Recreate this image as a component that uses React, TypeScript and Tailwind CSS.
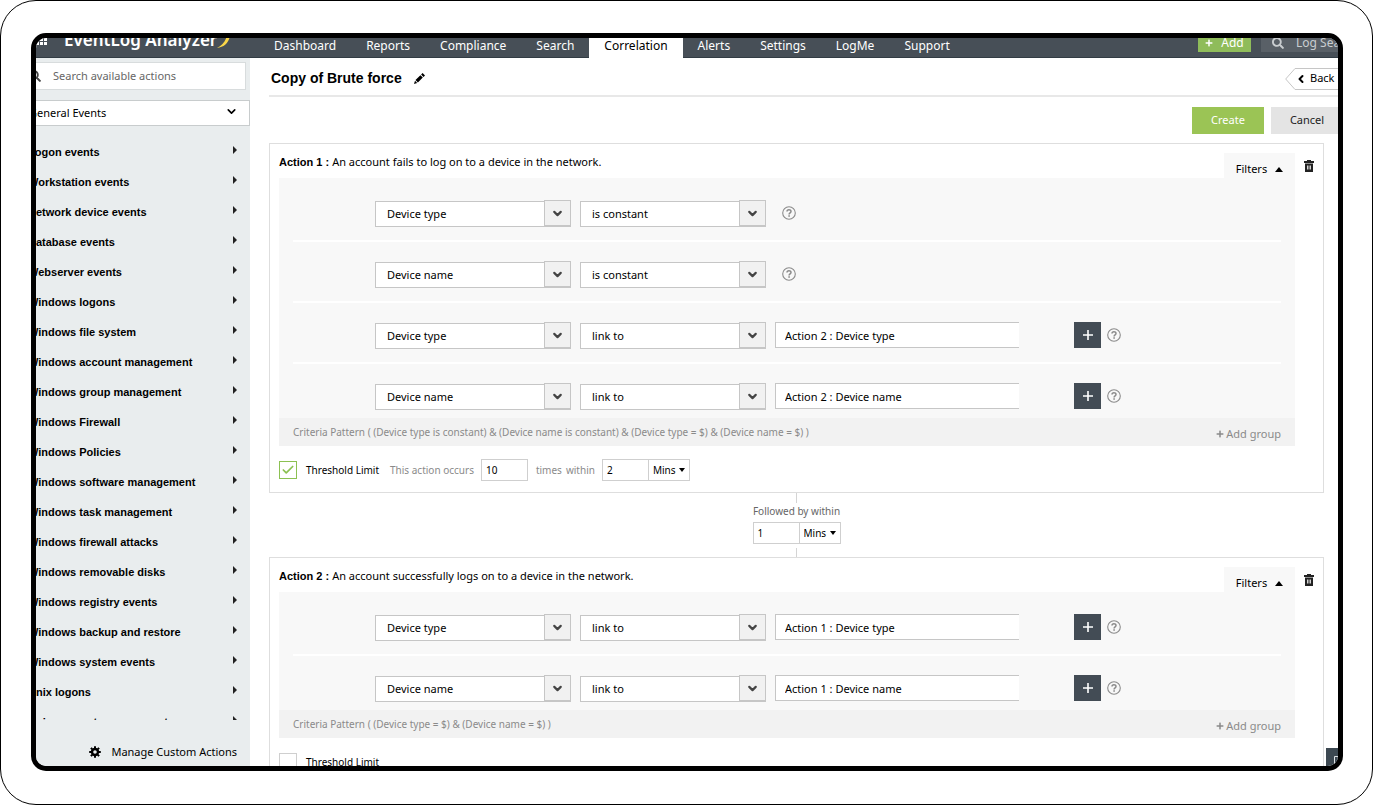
import React, { useState } from "react";
import { FaPlus, FaSearch } from "react-icons/fa";
import { FiCheck, FiChevronDown, FiChevronLeft } from "react-icons/fi";

interface ICriterion {
  field: string;
  operator: string;
  target?: string;
}

const navItems = [
  "Dashboard",
  "Reports",
  "Compliance",
  "Search",
  "Correlation",
  "Alerts",
  "Settings",
  "LogMe",
  "Support",
];

const eventGroups = [
  "Logon events",
  "Workstation events",
  "Network device events",
  "Database events",
  "Webserver events",
  "Windows logons",
  "Windows file system",
  "Windows account management",
  "Windows group management",
  "Windows Firewall",
  "Windows Policies",
  "Windows software management",
  "Windows task management",
  "Windows firewall attacks",
  "Windows removable disks",
  "Windows registry events",
  "Windows backup and restore",
  "Windows system events",
  "Unix logons",
  "Unix account management",
];

const firstCriteria: ICriterion[] = [
  { field: "Device type", operator: "is constant" },
  { field: "Device name", operator: "is constant" },
  { field: "Device type", operator: "link to", target: "Action 2 : Device type" },
  { field: "Device name", operator: "link to", target: "Action 2 : Device name" },
];

const secondCriteria: ICriterion[] = [
  { field: "Device type", operator: "link to", target: "Action 1 : Device type" },
  { field: "Device name", operator: "link to", target: "Action 1 : Device name" },
];

const TrashIcon: React.FC = () => (
  <svg viewBox="0 0 10 12" className="h-3 w-[10px]" fill="#222">
    <path d="M3 0h4v1h3v2H0V1h3z" />
    <path fillRule="evenodd" d="M1 3.6h8V12H1zM3.2 5.6v4h1.2v-4zM5.6 5.6v4h1.2v-4z" />
  </svg>
);

const GearIcon: React.FC = () => (
  <svg viewBox="0 0 12 12" className="h-3 w-3" fill="none" stroke="#000">
    <circle cx="6" cy="6" r="3" strokeWidth="2.4" />
    <path
      d="M6 .2v2M6 9.8v2M.2 6h2M9.8 6h2M1.9 1.9l1.4 1.4M8.7 8.7l1.4 1.4M1.9 10.1l1.4-1.4M8.7 3.3l1.4-1.4"
      strokeWidth="2"
    />
  </svg>
);

const PencilIcon: React.FC = () => (
  <svg viewBox="0 0 11 11" className="h-[11px] w-[11px]">
    <path d="M8.6 0 11 2.4 9.5 3.9 7.1 1.5zM6.4 2.2 8.8 4.6 3.9 9.5 1.5 7.1zM1 7.8 3.2 10 0 11z" />
  </svg>
);

const HelpButton: React.FC = () => (
  <button aria-label="Help" className="h-[14px] w-[14px] shrink-0">
    <svg viewBox="0 0 14 14" className="h-[14px] w-[14px]" fill="none" stroke="#8b8b8b">
      <circle cx="7" cy="7" r="6.3" strokeWidth="1.1" />
      <path d="M5 5.6C5 3.2 9 3.2 9 5.5 9 6.9 7.1 6.8 7.1 8.4" strokeWidth="1.5" />
      <path d="M7.1 9.3v1.5" strokeWidth="1.6" />
    </svg>
  </button>
);

const Dropdown: React.FC<{
  label: string;
  value: string;
  options: string[];
  className: string;
}> = ({ label, value, options, className }) => (
  <div className={`relative h-[26px] shrink-0 ${className}`}>
    <select
      aria-label={label}
      defaultValue={value}
      className="h-full w-full appearance-none border border-[#c6c6c6] bg-white pl-[11px] pr-8 text-[11px] text-black"
    >
      {options.map((option) => (
        <option key={option}>{option}</option>
      ))}
    </select>
    <span className="pointer-events-none absolute inset-y-0 right-0 flex w-[27px] items-center justify-center border border-[#c6c6c6] bg-[#f1f1f1]">
      <FiChevronDown className="h-[13px] w-[13px] text-[#444]" strokeWidth={4} />
    </span>
  </div>
);

const MinutesField: React.FC<{ label: string; value: string }> = ({ label, value }) => (
  <div className="flex h-[22px] border border-[#cfcfcf] bg-white">
    <input
      aria-label={label}
      defaultValue={value}
      className="w-[46px] border-r border-[#cfcfcf] px-1 text-[10px]"
    />
    <div className="relative w-10">
      <select
        aria-label={`${label} unit`}
        className="h-full w-full appearance-none pl-1 text-[10px]"
      >
        <option>Mins</option>
        <option>Hours</option>
      </select>
      <svg
        viewBox="0 0 6 4"
        className="pointer-events-none absolute right-1 top-2 h-1 w-[6px]"
      >
        <path d="M0 0h6L3 4z" />
      </svg>
    </div>
  </div>
);

const CriterionRow: React.FC<{ criterion: ICriterion }> = ({ criterion }) => (
  <li className="mt-[19px] flex items-center border-b-2 border-white pb-[14px] pl-[82px] first:mt-0 last:border-b-0 last:pb-0">
    <Dropdown
      label="Field"
      value={criterion.field}
      options={["Device type", "Device name"]}
      className="w-[196px]"
    />
    <Dropdown
      label="Operator"
      value={criterion.operator}
      options={["is constant", "link to"]}
      className="ml-[9px] w-[186px]"
    />
    {criterion.target ? (
      <>
        <input
          aria-label="Linked field"
          defaultValue={criterion.target}
          className="ml-[9px] h-[26px] w-[244px] border border-r-0 border-[#c6c6c6] bg-white px-[9px] text-[11px]"
        />
        <button
          aria-label="Add criterion"
          className="ml-[55px] mr-[6px] flex h-[26px] w-[27px] shrink-0 items-center justify-center bg-[#434c55]"
        >
          <svg viewBox="0 0 10 10" className="h-[10px] w-[10px]" stroke="#fff" strokeWidth="1.6">
            <path d="M5 0v10M0 5h10" />
          </svg>
        </button>
      </>
    ) : (
      <span className="w-4" />
    )}
    <HelpButton />
  </li>
);

const ActionCard: React.FC<{
  index: number;
  title: string;
  criteria: ICriterion[];
  pattern: string;
  threshold: boolean;
}> = ({ index, title, criteria, pattern, threshold }) => {
  const [enabled, setEnabled] = useState<boolean>(threshold);

  return (
    <section className="border border-[#dedede] pb-[11px] pl-[9px]">
      <div className="flex pt-[9px]">
        <h2 className="flex-1 text-[11px] leading-[17px]">
          <b className="font-[Liberation_Sans]">Action {index} : </b>
          {title}
        </h2>
        <button className="flex h-[25px] w-[71px] items-center justify-center gap-2 bg-[#f8f8f8] pt-[7px] text-[11px]">
          Filters
          <svg viewBox="0 0 8 5" className="h-[5px] w-2">
            <path d="M0 5h8L4 0z" />
          </svg>
        </button>
        <button aria-label="Delete action" className="flex h-[25px] w-7 items-center justify-center">
          <TrashIcon />
        </button>
      </div>

      <div className="mr-7 bg-[#f8f8f8]">
        <ul className="mx-[14px] pb-[9px] pt-[22px]">
          {criteria.map((criterion, i) => (
            <CriterionRow key={i} criterion={criterion} />
          ))}
        </ul>
        <div className="flex h-7 items-center justify-between bg-[#f2f2f2] px-[14px] text-[10px] text-[#8a8a8a]">
          <span>{pattern}</span>
          <button className="flex items-center gap-[2px] pt-1 text-[11px]">
            <FaPlus className="h-2 w-2" />
            Add group
          </button>
        </div>
      </div>

      <div className="mt-[13px] flex h-[22px] items-center text-[10px] text-[#8a8a8a]">
        <label className="flex items-center gap-[9px] text-black">
          <span className="relative h-[18px] w-[18px]">
            <input
              type="checkbox"
              checked={enabled}
              onChange={(e) => setEnabled(e.target.checked)}
              className="block h-[18px] w-[18px] appearance-none border border-[#cfcfcf] bg-white checked:border-[#8cc152]"
            />
            {enabled && (
              <FiCheck
                className="pointer-events-none absolute left-[2px] top-[2px] h-[14px] w-[14px] text-[#8cc152]"
                strokeWidth={3}
              />
            )}
          </span>
          Threshold Limit
        </label>
        {enabled && (
          <>
            <span className="ml-[11px]">This action occurs</span>
            <input
              aria-label="Occurrences"
              defaultValue="10"
              className="ml-[7px] mr-2 h-[22px] w-[47px] border border-[#cfcfcf] px-1 text-black"
            />
            <span className="mr-1">times</span>
            <span className="mr-[7px]">within</span>
            <div className="text-black">
              <MinutesField label="Threshold window" value="2" />
            </div>
          </>
        )}
      </div>
    </section>
  );
};

const TopBar: React.FC = () => (
  <header className="-mt-7 flex h-12 shrink-0 items-end border-b border-[#323c44] bg-[#474f57] text-white">
    <div className="flex h-[34px] w-[243px] shrink-0 items-center pl-5">
      <svg viewBox="0 0 12 12" className="mr-4 h-3 w-3" fill="#fff">
        <path d="M0 0h3v3H0zM4 0h3v3H4zM8 0h3v3H8zM0 4h3v3H0zM4 4h3v3H4zM8 4h3v3H8zM0 8h3v3H0zM4 8h3v3H4zM8 8h3v3H8z" />
      </svg>
      <span className="whitespace-nowrap text-[17px] font-semibold">EventLog Analyzer</span>
      <svg viewBox="0 0 14 20" className="h-5 w-[14px]">
        <path d="M12 0C15 8 10 17 0 18 6 15 11 9 10 0z" fill="#f9d648" />
      </svg>
    </div>
    <nav className="flex flex-1">
      {navItems.map((item) => (
        <a
          key={item}
          href="#"
          className={
            item === "Correlation"
              ? "-mb-px flex h-[26px] items-center bg-white px-[15px] pt-px text-[12px] text-black"
              : "flex h-[25px] items-center px-[15px] pt-[2px] text-[12px]"
          }
        >
          {item}
        </a>
      ))}
    </nav>
    <button className="mb-[5px] mr-[10px] flex h-[18px] w-[53px] items-center justify-center gap-2 bg-[#8fbc5a] text-[12px]">
      <FaPlus className="h-2 w-2" />
      Add
    </button>
    <div className="mb-[5px] flex h-[18px] w-[89px] items-center gap-3 bg-[#596067] pl-[11px] text-[#c9cdd0]">
      <FaSearch className="h-3 w-3 shrink-0" />
      <input
        aria-label="Log search"
        placeholder="Log Search"
        className="w-full min-w-0 text-[12px] placeholder:text-[#c9cdd0]"
      />
    </div>
  </header>
);

const Sidebar: React.FC = () => (
  <aside className="flex w-[234px] shrink-0 flex-col bg-[#e9edee]">
    <div className="mr-1 mt-1 flex h-7 shrink-0 items-center border border-[#d8dcdd] bg-white pl-3">
      <FaSearch className="mr-3 h-3 w-3 shrink-0 text-[#444]" />
      <input
        aria-label="Search available actions"
        placeholder="Search available actions"
        className="w-full min-w-0 text-[11px] placeholder:text-[#666]"
      />
    </div>
    <div className="relative mt-[9px] h-[26px] shrink-0">
      <select
        aria-label="Event category"
        className="h-full w-full appearance-none border border-[#c8cccd] bg-white pl-3 text-[11px]"
      >
        <option>General Events</option>
        <option>Custom Events</option>
      </select>
      <FiChevronDown
        className="pointer-events-none absolute right-3 top-[6px] h-[13px] w-[13px]"
        strokeWidth={3}
      />
    </div>
    <ul className="mt-3 min-h-0 flex-1 overflow-hidden">
      {eventGroups.map((group) => (
        <li key={group}>
          <button className="flex h-[30px] w-full items-center justify-between pl-3 pr-[13px] font-[Liberation_Sans] text-[11px] font-bold">
            {group}
            <svg viewBox="0 0 4 8" className="mb-1 h-2 w-1" fill="#222">
              <path d="M0 0v8l4-4z" />
            </svg>
          </button>
        </li>
      ))}
    </ul>
    <button className="flex h-[46px] shrink-0 items-center justify-end gap-[10px] pr-[13px] pt-[18px] text-[11px]">
      <GearIcon />
      Manage Custom Actions
    </button>
  </aside>
);

const App: React.FC = () => {
  return (
    <div className="flex h-screen flex-col rounded-[36px] border border-black bg-white pb-[33px] pl-[30px] pr-[29px] pt-8 font-[Noto_Sans,sans-serif] text-black">
      <div className="relative flex min-h-0 flex-1 flex-col overflow-hidden rounded-[15px] border-[5px] border-black">
        <div className="-ml-5 -mr-3 flex min-h-0 flex-1 flex-col">
          <TopBar />
          <div className="flex min-h-0 flex-1">
            <Sidebar />
            <main className="min-w-0 flex-1 overflow-hidden pl-[19px]">
              <div className="flex h-[39px] items-center justify-between border-b-2 border-[#e8e8e8]">
                <div className="flex items-center gap-3 pl-[2px] pt-1">
                  <h1 className="font-[Liberation_Sans] text-[14px] font-bold">
                    Copy of Brute force
                  </h1>
                  <button aria-label="Rename rule">
                    <PencilIcon />
                  </button>
                </div>
                <button className="flex h-[22px] items-center pt-1 text-[11px]">
                  <svg viewBox="0 0 10 22" className="h-[22px] w-[10px]" fill="none" stroke="#c6c6c6">
                    <path d="M10 .5 .7 11 10 21.5" />
                  </svg>
                  <span className="flex h-[22px] w-[55px] items-center gap-[3px] border-y border-[#c6c6c6]">
                    <FiChevronLeft className="h-3 w-3" strokeWidth={4} />
                    Back
                  </span>
                </button>
              </div>
              <div className="mr-[7px] flex justify-end gap-[7px] pb-[9px] pt-[10px] text-[11px]">
                <button className="h-[27px] w-[72px] bg-[#9bc455] text-white">Create</button>
                <button className="h-[27px] w-[72px] bg-[#e4e4e4] text-[#222]">Cancel</button>
              </div>

              <div className="mr-[26px]">
                <ActionCard
                  index={1}
                  title="An account fails to log on to a device in the network."
                  criteria={firstCriteria}
                  pattern="Criteria Pattern ( (Device type is constant) & (Device name is constant) & (Device type = $) & (Device name = $) )"
                  threshold={true}
                />
                <div className="flex flex-col items-center text-[10px]">
                  <span className="h-[10px] w-px bg-[#d4d4d4]" />
                  <span className="pb-[2px] leading-[17px] text-[#666]">Followed by within</span>
                  <MinutesField label="Followed by within" value="1" />
                  <span className="mt-1 h-[9px] w-px bg-[#d4d4d4]" />
                </div>
                <ActionCard
                  index={2}
                  title="An account successfully logs on to a device in the network."
                  criteria={secondCriteria}
                  pattern="Criteria Pattern ( (Device type = $) & (Device name = $) )"
                  threshold={false}
                />
              </div>
            </main>
          </div>
        </div>
        <button
          aria-label="Open chat"
          className="absolute bottom-0 right-0 h-[18px] w-3 overflow-hidden bg-[#3c4851]"
        >
          <svg viewBox="0 0 12 18" className="h-[18px] w-3" fill="none" stroke="#dfe3e6">
            <path d="M8.5 18V8.5H12" />
          </svg>
        </button>
      </div>
    </div>
  );
};

export default App;
